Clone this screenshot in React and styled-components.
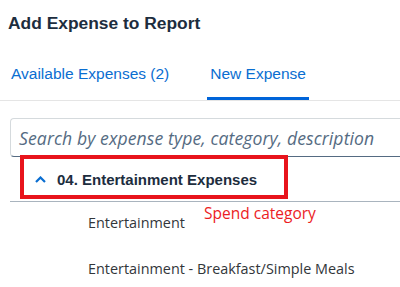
import React from "react";
import styled, { createGlobalStyle } from "styled-components";

const Global = createGlobalStyle`
  body {
    margin: 0;
    background: #ffffff;
    font-family: "Liberation Sans", Arial, sans-serif;
    overflow: hidden;
  }
`;

const Page = styled.div`
  width: 400px;
  height: 287px;
  overflow: hidden;
  background: #fff;
`;

const Title = styled.h1`
  margin: 0;
  padding: 13px 0 0 8px;
  height: 40px;
  box-sizing: border-box;
  font-size: 17.4px;
  font-weight: 700;
  color: #1d2d3e;
`;

const TabBar = styled.div`
  display: flex;
  gap: 38px;
  padding-left: 11px;
  height: 61px;
  border-bottom: 1px solid #e5e5e5;
  box-sizing: border-box;
  align-items: flex-end;
`;

const Tab = styled.div`
  font-size: 15.5px;
  color: #0a6ed1;
  padding: 0 3px 14px;
  margin-left: -3px;
  border-bottom: 3px solid ${(p) => (p.$active ? "#0064d9" : "transparent")};
`;

const Body = styled.div`
  padding: 17px 0 0 10px;
`;

const Search = styled.div`
  height: 39px;
  box-sizing: border-box;
  border: 1px solid #d5dadd;
  border-bottom-color: #556b82;
  border-right: none;
  border-radius: 4px 0 0 4px;
  display: flex;
  align-items: center;
  padding-left: 8px;
  font-family: "Open Sans", sans-serif;
  font-style: italic;
  font-size: 17.6px;
  letter-spacing: 0.1px;
  color: #556b82;
  white-space: nowrap;
`;

const GroupRow = styled.div`
  position: relative;
  height: 44px;
  border-bottom: 1px solid #a9b4be;
  display: flex;
  align-items: center;
  padding-left: 25px;
  gap: 11px;
  font-size: 15px;
  font-weight: 700;
  color: #1d2d3e;
`;

const Highlight = styled.div`
  position: absolute;
  left: 10px;
  top: -2px;
  width: 268px;
  height: 44px;
  box-sizing: border-box;
  border: 4px solid #e8141c;
`;

const Note = styled.span`
  position: absolute;
  left: 194px;
  top: 45px;
  font-family: "Open Sans", sans-serif;
  font-weight: 400;
  font-size: 15.5px;
  color: #ec1c24;
`;

const Items = styled.div`
  padding-top: 0;
  margin-top: -3px;
`;

const Item = styled.div`
  height: 46px;
  display: flex;
  align-items: center;
  padding-left: 78px;
  font-family: "Open Sans", sans-serif;
  font-size: 14.4px;
  color: #32363a;
`;

export default function App() {
  return (
    <Page>
      <Global />
      <Title>Add Expense to Report</Title>
      <TabBar>
        <Tab>Available Expenses (2)</Tab>
        <Tab $active>New Expense</Tab>
      </TabBar>
      <Body>
        <Search>Search by expense type, category, description</Search>
        <GroupRow>
          <svg width="11" height="7" viewBox="0 0 11 7">
            <path d="M1 6 L5.5 1.5 L10 6" fill="none" stroke="#0a6ed1" strokeWidth="2.2" />
          </svg>
          04. Entertainment Expenses
          <Highlight />
          <Note>Spend category</Note>
        </GroupRow>
        <Items>
          <Item>Entertainment</Item>
          <Item>Entertainment - Breakfast/Simple Meals</Item>
        </Items>
      </Body>
    </Page>
  );
}
